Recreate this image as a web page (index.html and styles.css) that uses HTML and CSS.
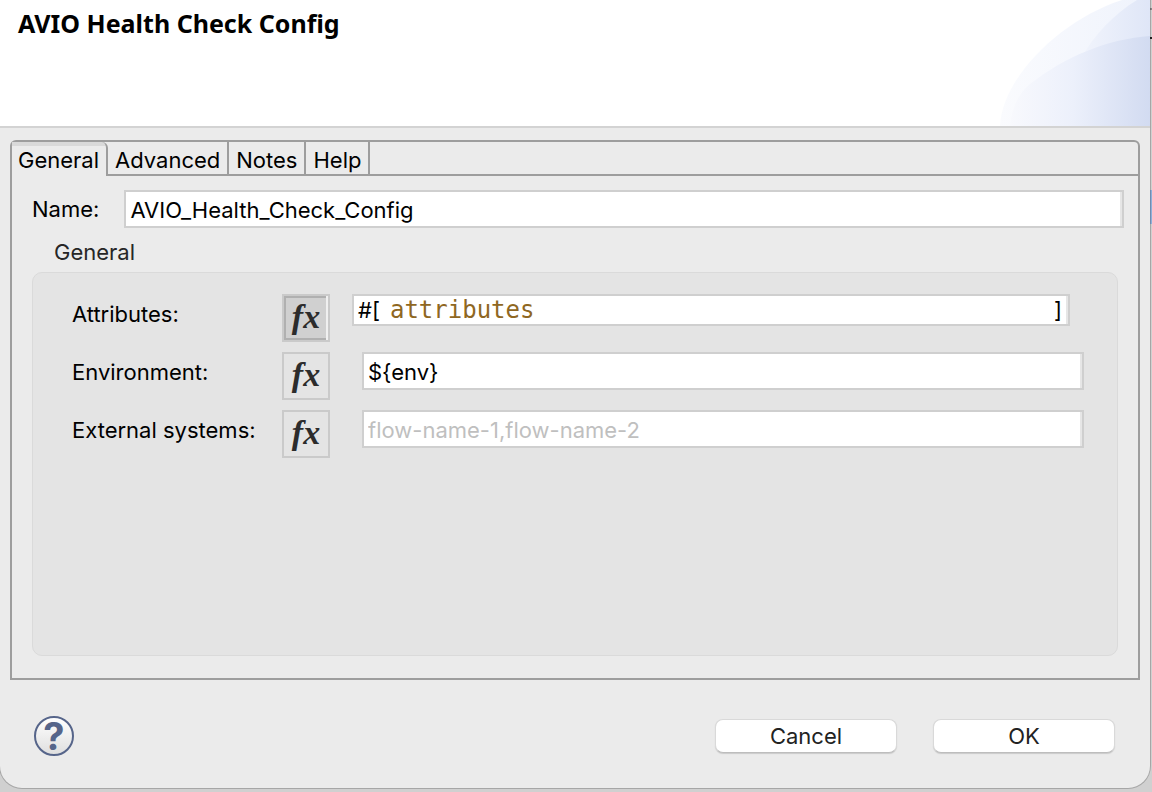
FILE: index.html
```html
<!DOCTYPE html>
<html lang="en">
<head>
<meta charset="utf-8">
<meta name="viewport" content="width=device-width, initial-scale=1">
<title>AVIO Health Check Config</title>
<link rel="stylesheet" href="styles.css">
</head>
<body>
<main class="dialog">
  <header class="banner">
    <h1 class="banner-title">AVIO Health Check Config</h1>
    <svg class="banner-art" viewBox="0 0 150 126" aria-hidden="true">
      <defs>
        <linearGradient id="outer" x1="0" x2="1" y1="0" y2="0">
          <stop offset="0" stop-color="#fafbfe"/>
          <stop offset="1" stop-color="#eff3fc"/>
        </linearGradient>
        <linearGradient id="upper" x1="0" x2="1" y1="0" y2="0">
          <stop offset="0" stop-color="#f1f4fc"/>
          <stop offset="1" stop-color="#dfe6f7"/>
        </linearGradient>
        <linearGradient id="lower" x1="0" x2="1" y1="0" y2="0">
          <stop offset="0" stop-color="#f8f9fd"/>
          <stop offset="0.45" stop-color="#ecf0fb"/>
          <stop offset="1" stop-color="#d2dbf1"/>
        </linearGradient>
      </defs>
      <path fill="url(#outer)" d="M0 126C2 78 60 20 122 0H150V126Z"/>
      <path fill="url(#upper)" d="M82 57C94 35 114 14 137 0H150V60H82Z"/>
      <path fill="url(#lower)" d="M10 126C12 108 18 94 30 84C66 56 108 39 150 36V126Z"/>
    </svg>
  </header>

  <div class="folder">
    <div class="tabs" role="tablist">
      <button class="tab tab-selected" type="button" role="tab" aria-selected="true" id="tab-general" aria-controls="panel-general">General</button>
      <button class="tab" type="button" role="tab" aria-selected="false">Advanced</button>
      <button class="tab" type="button" role="tab" aria-selected="false">Notes</button>
      <button class="tab" type="button" role="tab" aria-selected="false">Help</button>
      <span class="tabs-rest"></span>
    </div>
    <section class="panel" id="panel-general" role="tabpanel" aria-labelledby="tab-general">
      <div class="name-row">
        <label for="name">Name:</label>
        <input class="field" id="name" type="text" value="AVIO_Health_Check_Config">
      </div>
      <h2 class="group-title">General</h2>
      <div class="group">
        <div class="row">
          <label class="row-label" for="attributes">Attributes:</label>
          <button class="fx fx-on" type="button" aria-pressed="true" aria-label="Expression mode for attributes">fx</button>
          <div class="expression">
            <span>#[</span>
            <input class="expression-input" id="attributes" type="text" value="attributes">
            <span>]</span>
          </div>
        </div>
        <div class="row">
          <label class="row-label" for="environment">Environment:</label>
          <button class="fx" type="button" aria-pressed="false" aria-label="Expression mode for environment">fx</button>
          <input class="field" id="environment" type="text" value="${env}">
        </div>
        <div class="row">
          <label class="row-label" for="systems">External systems:</label>
          <button class="fx" type="button" aria-pressed="false" aria-label="Expression mode for external systems">fx</button>
          <input class="field" id="systems" type="text" placeholder="flow-name-1,flow-name-2">
        </div>
      </div>
    </section>
  </div>

  <footer class="actions">
    <button class="help" type="button" aria-label="Help">?</button>
    <button class="push" type="button">Cancel</button>
    <button class="push" type="button">OK</button>
  </footer>
</main>
</body>
</html>
```

FILE: styles.css
```css
* {
  box-sizing: border-box;
}

html {
  height: 100%;
}

body {
  min-height: 100%;
  margin: 0;
  padding: 0 2px 4px 0;
  display: flex;
  background:
    linear-gradient(#888, #888) right 8px / 2px 2px no-repeat,
    linear-gradient(#222, #222) right 37px / 2px 2px no-repeat,
    linear-gradient(#8fb0da, #8fb0da) right 190px / 2px 34px no-repeat,
    #d0d0d0;
  color: #000;
  font: 22px/26px Inter, "Liberation Sans", sans-serif;
}

button,
input {
  margin: 0;
  font: inherit;
  color: inherit;
}

.dialog {
  flex: 1;
  display: flex;
  flex-direction: column;
  overflow: hidden;
  border-radius: 0 0 22px 22px;
  background: #ebebeb;
  box-shadow: 0 0 0 1px rgba(0, 0, 0, 0.2);
}

.banner {
  display: flex;
  justify-content: space-between;
  height: 128px;
  border-bottom: 2px solid #d3d3d3;
  background: #fff;
}

.banner-title {
  margin: 0;
  padding: 8px 18px;
  font: bold 25px/30px "Noto Sans", "Open Sans", sans-serif;
}

.banner-art {
  width: 150px;
  height: 126px;
}

.folder {
  flex: 1;
  display: flex;
  flex-direction: column;
  margin: 12px 10px 0;
  border: 2px solid #9d9d9d;
  border-radius: 6px 6px 0 0;
}

.tabs {
  display: flex;
  height: 34px;
}

.tab {
  padding: 4px 7px 0;
  border: solid #9d9d9d;
  border-width: 0 2px 2px 0;
  background: none;
}

.tab-selected {
  padding: 4px 7px 2px 6px;
  border-bottom-width: 0;
  border-top-right-radius: 6px;
  background: linear-gradient(#d9d9d9, #d9d9d9) top / 100% 4px no-repeat;
}

.tabs-rest {
  flex: 1;
  border-bottom: 2px solid #9d9d9d;
}

.panel {
  flex: 1;
  display: flex;
  flex-direction: column;
  padding: 14px 20px 22px;
}

.name-row {
  display: flex;
  align-items: center;
  gap: 25px;
  margin-right: -6px;
}

.field {
  flex: 1;
  min-width: 0;
  height: 38px;
  padding: 2px 4px 0;
  border: 2px solid #cfcfcf;
  border-radius: 0;
  background: #fff;
  box-shadow: inset -2px 0 #e6e6e6;
  outline: none;
}

.field::placeholder {
  color: #bfbfbf;
  opacity: 1;
}

.group-title {
  margin: 11px 22px 7px;
  color: #262626;
  font-size: 22px;
  font-weight: 400;
}

.group {
  flex: 1;
  display: flex;
  flex-direction: column;
  gap: 10px;
  padding: 21px 33px 20px 39px;
  border: 1px solid #dadada;
  border-radius: 10px;
  background: #e4e4e4;
}

.row {
  display: flex;
  align-items: flex-start;
}

.row-label {
  width: 210px;
  padding-top: 7px;
}

.fx {
  width: 48px;
  height: 48px;
  margin-right: 32px;
  padding: 0 0 2px;
  border: 2px solid #cacaca;
  background: none;
  color: #2c2c2c;
  font: italic bold 34px/40px "Liberation Serif", serif;
}

.fx-on {
  margin-right: 22px;
  background: #d0d0d0;
  box-shadow: inset -2px 0 #f0f0f0, inset 0 0 0 2px #b0b0b0;
}

.expression {
  flex: 1;
  display: flex;
  align-items: center;
  height: 32px;
  margin-right: 14px;
  padding: 0 6px 0 4px;
  border: 2px solid #cfcfcf;
  background: #fff;
  box-shadow: inset -2px 0 #e6e6e6;
}

.expression-input {
  flex: 1;
  min-width: 0;
  height: 28px;
  padding: 0 10px;
  border: 0;
  background: none;
  color: #8f6722;
  font: 24px/28px "DejaVu Sans Mono", monospace;
  outline: none;
}

.actions {
  display: flex;
  align-items: center;
  gap: 36px;
  padding: 36px 35px 32px 34px;
}

.help {
  width: 40px;
  height: 40px;
  margin-right: auto;
  padding: 0;
  border: 2px solid #56658a;
  border-radius: 50%;
  background: linear-gradient(#fff, #dfdfdf);
  color: #56658a;
  font: bold 38px/36px Inter, "Liberation Sans", sans-serif;
}

.push {
  width: 182px;
  height: 34px;
  padding: 0;
  border: 1px solid #d9d9d9;
  border-bottom-color: #bdbdbd;
  border-radius: 8px;
  background: #fff;
  box-shadow: 0 1px 1px #cacaca;
  color: #222;
}
```
